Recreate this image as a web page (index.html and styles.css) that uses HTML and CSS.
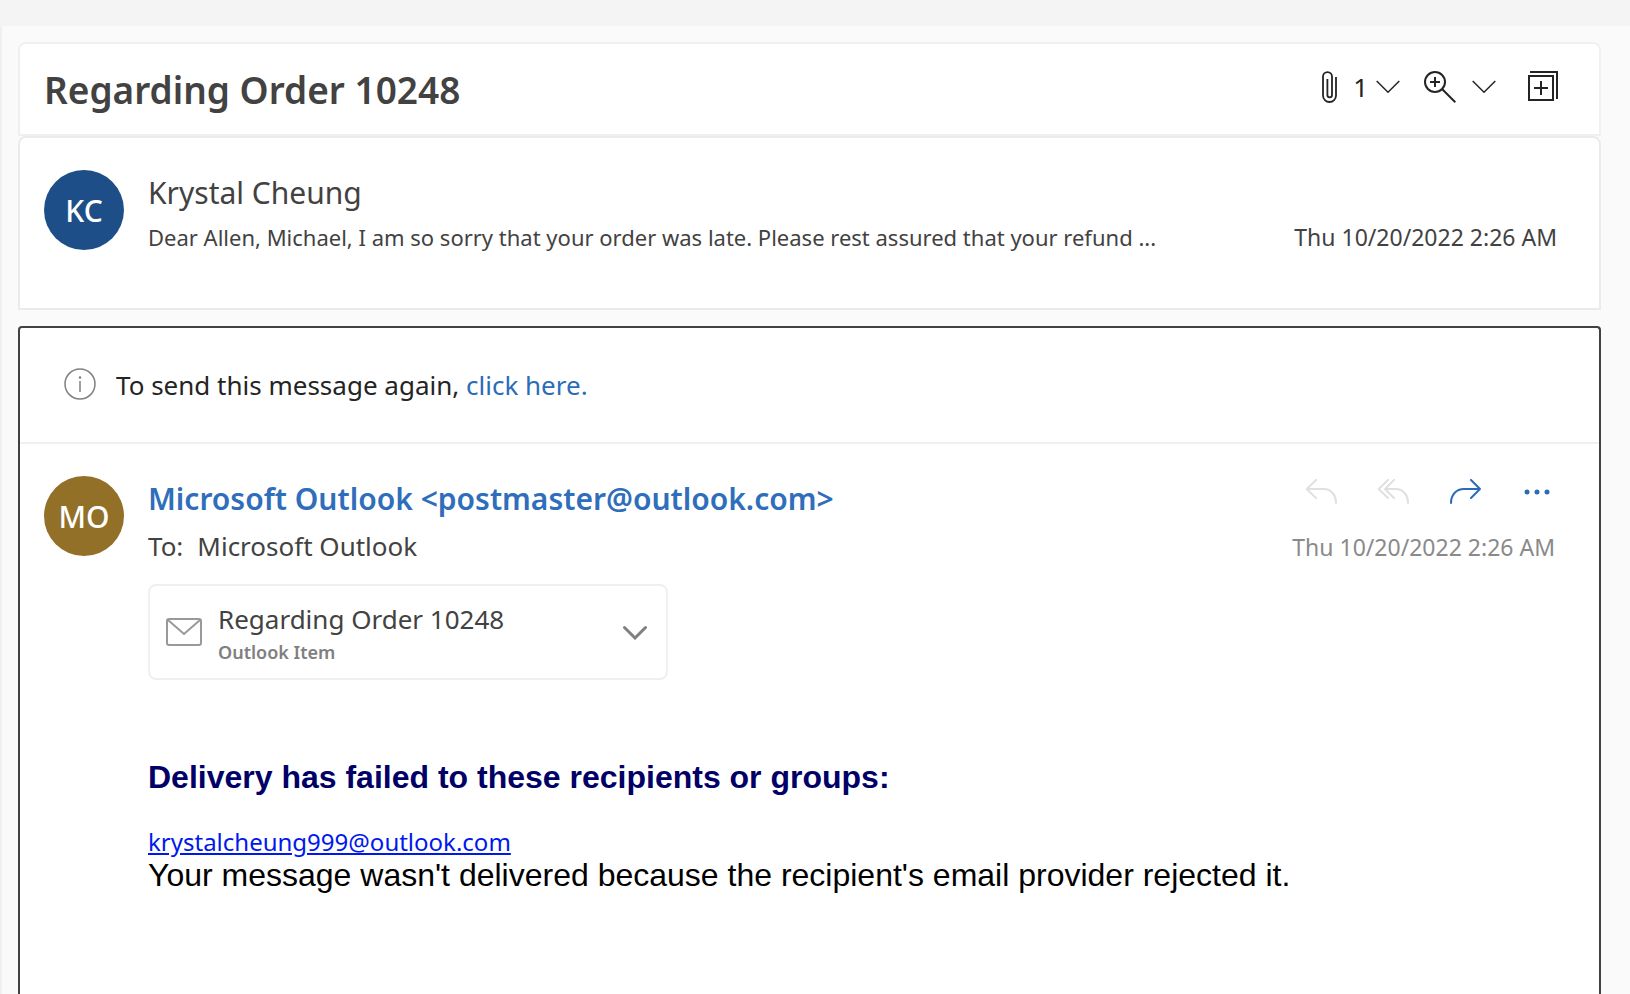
FILE: index.html
```html
<!DOCTYPE html>
<html lang="en">
<head>
<meta charset="utf-8">
<meta name="viewport" content="width=device-width, initial-scale=1">
<title>Regarding Order 10248</title>
<link rel="stylesheet" href="styles.css">
</head>
<body>
<main class="pane">
  <header class="card subject">
    <h1 class="subject-title">Regarding Order 10248</h1>
    <div class="toolbar">
      <button class="icon-btn attachments" aria-label="1 attachment">
        <svg class="clip" width="16" height="32" viewBox="0 0 16 32"><path d="M15 6V24.5a6.5 6.5 0 0 1-13 0V5.6a4.5 4.5 0 0 1 9 0V24a2.3 2.3 0 0 1-4.6 0V8"/></svg>
        <span class="count">1</span>
        <svg width="24" height="14" viewBox="0 0 24 14"><path d="M.7 1 12 12.3 23.3 1"/></svg>
      </button>
      <button class="icon-btn zoom" aria-label="Zoom">
        <svg class="bold" width="32" height="32" viewBox="0 0 32 32"><circle cx="11" cy="11" r="10"/><path d="M11 6v10M6 11h10M18.3 18.3 31.3 31.3"/></svg>
        <svg width="24" height="14" viewBox="0 0 24 14"><path d="M.7 1 12 12.3 23.3 1"/></svg>
      </button>
      <button class="icon-btn" aria-label="Expand all">
        <svg class="bold" width="30" height="32" viewBox="0 0 30 32"><path d="M1 5h24v24H1zM13 10v14M6 17h14M2 1h27v27"/></svg>
      </button>
    </div>
  </header>

  <article class="card collapsed">
    <div class="avatar avatar-blue">KC</div>
    <div class="summary">
      <h2 class="from">Krystal Cheung</h2>
      <div class="summary-row">
        <p class="snippet">Dear Allen, Michael, I am so sorry that your order was late. Please rest assured that your refund ...</p>
        <time class="date">Thu 10/20/2022 2:26 AM</time>
      </div>
    </div>
  </article>

  <article class="card opened">
    <div class="notice">
      <svg width="32" height="32" viewBox="0 0 32 32"><circle cx="16" cy="15" r="15"/><path d="M16 12v11"/><circle class="dot" cx="16" cy="8.5" r="1.3"/></svg>
      <p>To send this message again, <a class="notice-link" href="#">click here.</a></p>
    </div>

    <div class="message">
      <div class="avatar avatar-gold">MO</div>
      <div class="content">
        <div class="message-head">
          <div class="people">
            <h2 class="sender">Microsoft Outlook &lt;postmaster@outlook.com&gt;</h2>
            <p class="to"><span>To:</span><span>Microsoft Outlook</span></p>
          </div>
          <div class="meta">
            <div class="actions">
              <button class="icon-btn" aria-label="Reply" disabled>
                <svg width="32" height="26" viewBox="0 0 32 26"><path d="M11 1 1.7 10 11 19M1.7 10H19C26 10 31 16 31 24"/></svg>
              </button>
              <button class="icon-btn" aria-label="Reply all" disabled>
                <svg width="32" height="26" viewBox="0 0 32 26"><path d="M11 1 1.7 10 11 19M17 1 8 10l9 9M8 10h11C26 10 31 16 31 24"/></svg>
              </button>
              <button class="icon-btn" aria-label="Forward">
                <svg width="32" height="26" viewBox="0 0 32 26"><path d="M22 1l9 9-9 9M31 10H15C7 10 2 16 2 24"/></svg>
              </button>
              <button class="icon-btn" aria-label="More actions">
                <svg width="34" height="26" viewBox="0 0 34 26"><circle class="dot" cx="6" cy="13" r="2.5"/><circle class="dot" cx="16" cy="13" r="2.5"/><circle class="dot" cx="26" cy="13" r="2.5"/></svg>
              </button>
            </div>
            <time class="date">Thu 10/20/2022 2:26 AM</time>
          </div>
        </div>

        <div class="attachment">
          <svg width="36" height="28" viewBox="0 0 36 28"><rect x="1" y="1" width="34" height="26" rx="2"/><path d="M2 2 18 16 34 2"/></svg>
          <div class="file">
            <p class="file-name">Regarding Order 10248</p>
            <p class="file-kind">Outlook Item</p>
          </div>
          <button class="icon-btn" aria-label="Attachment options">
            <svg class="heavy" width="24" height="16" viewBox="0 0 24 16"><path d="M1.5 3.5 12 14 22.5 3.5"/></svg>
          </button>
        </div>

        <div class="body">
          <h3 class="failure">Delivery has failed to these recipients or groups:</h3>
          <p class="recipient"><a href="mailto:krystalcheung999@outlook.com">krystalcheung999@outlook.com</a></p>
          <p class="reason">Your message wasn't delivered because the recipient's email provider rejected it.</p>
        </div>
      </div>
    </div>
  </article>
</main>
</body>
</html>
```

FILE: styles.css
```css
* { box-sizing: border-box; }

body {
  margin: 0;
  min-height: 100vh;
  padding-top: 26px;
  display: flex;
  flex-direction: column;
  background: #f4f4f4;
  color: #424242;
  font-family: "Noto Sans", "Open Sans", sans-serif;
}

h1, h2, h3, p { margin: 0; font-weight: 400; }

svg {
  display: block;
  flex: none;
  fill: none;
  stroke: currentColor;
  stroke-width: 1.5;
}
svg .dot { fill: currentColor; stroke: none; }
svg.clip { stroke-width: 1.8; }
svg.bold { stroke-width: 2; }
svg.heavy { stroke-width: 3; stroke-linecap: round; }

.pane {
  flex: 1;
  display: flex;
  flex-direction: column;
  padding: 16px 29px 0 16px;
  border-left: 2px solid #f0f0f0;
  background: #fafafa;
}

.card {
  background: #fff;
  border: 2px solid #ebebeb;
  border-radius: 8px 8px 0 0;
}

.icon-btn {
  display: flex;
  align-items: center;
  padding: 0;
  border: 0;
  background: none;
  color: inherit;
  font: inherit;
  cursor: pointer;
}

/* Subject bar */
.subject {
  display: flex;
  align-items: center;
  justify-content: space-between;
  min-height: 94px;
  padding: 2px 41px 0 24px;
  border-color: #f0f0f0;
}
.subject-title { font-size: 37px; line-height: 48px; font-weight: 600; }
.toolbar {
  display: flex;
  align-items: center;
  gap: 24px;
  padding-bottom: 6px;
  color: #242424;
  font-size: 26px;
  line-height: 32px;
}
.zoom { gap: 16px; margin-right: 8px; }
.attachments { gap: 8px; }
.count { padding-left: 8px; }

/* Avatars */
.avatar {
  flex: none;
  display: flex;
  align-items: center;
  justify-content: center;
  width: 80px;
  height: 80px;
  border-radius: 50%;
  color: #fff;
  font-size: 30px;
  font-weight: 500;
}
.avatar-blue { background: #1e4e87; }
.avatar-gold { background: #937028; }

/* Collapsed message */
.collapsed {
  display: flex;
  gap: 24px;
  padding: 32px 42px 50px 24px;
}
.summary { flex: 1; min-width: 0; }
.from { font-size: 30px; line-height: 46px; }
.summary-row {
  display: flex;
  justify-content: space-between;
  gap: 24px;
}
.snippet {
  min-width: 0;
  overflow: hidden;
  text-overflow: ellipsis;
  white-space: nowrap;
  font-size: 22px;
  line-height: 42px;
}
.date { font-size: 23px; line-height: 42px; white-space: nowrap; }

/* Opened message */
.opened {
  flex: 1;
  margin-top: 16px;
  border-color: #424242;
  border-bottom: 0;
  border-radius: 4px 4px 0 0;
}
.notice {
  display: flex;
  align-items: center;
  gap: 20px;
  min-height: 116px;
  padding: 0 44px;
  border-bottom: 2px solid #f0f0f0;
  color: #242424;
  font-size: 26px;
}
.notice svg { overflow: visible; color: #808080; }
.notice-link { color: #2b6cb8; text-decoration: none; }

.message { display: flex; gap: 24px; padding: 32px 44px 32px 24px; }
.content { flex: 1; min-width: 0; }
.message-head { display: flex; justify-content: space-between; gap: 24px; }
.sender {
  color: #2f6ebb;
  font-size: 30px;
  line-height: 46px;
  font-weight: 600;
}
.to {
  display: flex;
  gap: 14px;
  margin-top: 2px;
  font-size: 26px;
  line-height: 44px;
}
.actions {
  display: flex;
  align-items: center;
  justify-content: flex-end;
  gap: 40px;
  height: 32px;
  margin-bottom: 18px;
  color: #2b6cb8;
}
.actions svg { stroke-width: 2; stroke-linecap: round; stroke-linejoin: round; }
.actions .icon-btn:disabled { color: #e0e0e0; cursor: default; }
.meta { display: flex; flex-direction: column; align-items: flex-end; color: #8a8a8a; }

.attachment {
  display: flex;
  align-items: center;
  gap: 16px;
  max-width: 520px;
  min-height: 96px;
  margin-top: 16px;
  padding: 0 19px 0 16px;
  border: 2px solid #f0f0f0;
  border-radius: 8px;
  color: #808080;
}
.attachment > svg { color: #999; stroke-width: 2; }
.file { flex: 1; }
.file-name { color: #424242; font-size: 26px; line-height: 40px; }
.file-kind { font-size: 18px; line-height: 26px; font-weight: 600; }

.body { margin-top: 79px; color: #000; font-size: 32px; }
.failure {
  margin-bottom: 31px;
  color: #000066;
  font-family: "Liberation Sans", Arial, sans-serif;
  font-size: 32px;
  line-height: 36px;
  font-weight: 700;
}
.recipient { font-size: 24px; line-height: 32px; }
.recipient a { color: #0018ee; }
.reason { font-family: "Liberation Sans", Arial, sans-serif; line-height: 34px; }
```
